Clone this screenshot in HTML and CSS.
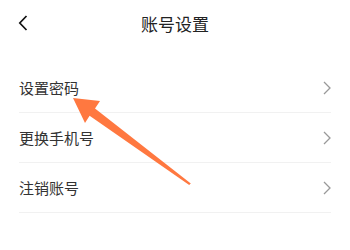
FILE: index.html
```html
<!DOCTYPE html>
<html lang="zh-CN">
<head>
  <meta charset="UTF-8">
  <meta name="viewport" content="width=device-width, initial-scale=1.0">
  <title>账号设置</title>
  <link rel="stylesheet" href="styles.css">
</head>
<body>
  <div class="page">
    <div class="header">
      <span class="back">
        <svg width="10" height="16" viewBox="0 0 10 16"><path d="M8.5 1 L1.8 8 L8.5 15" fill="none" stroke="#111" stroke-width="1.7"/></svg>
      </span>
      <h2 class="title">账号设置</h2>
    </div>

    <ul class="menu">
      <li class="menu-item">
        <span>设置密码</span>
        <svg class="chevron" width="8" height="14" viewBox="0 0 8 14"><path d="M1 1 L7 7 L1 13" fill="none" stroke="#999" stroke-width="1.3"/></svg>
      </li>
      <li class="menu-item">
        <span>更换手机号</span>
        <svg class="chevron" width="8" height="14" viewBox="0 0 8 14"><path d="M1 1 L7 7 L1 13" fill="none" stroke="#999" stroke-width="1.3"/></svg>
      </li>
      <li class="menu-item">
        <span>注销账号</span>
        <svg class="chevron" width="8" height="14" viewBox="0 0 8 14"><path d="M1 1 L7 7 L1 13" fill="none" stroke="#999" stroke-width="1.3"/></svg>
      </li>
    </ul>

    <!-- annotation arrow drawn over the list -->
    <svg class="pointer" width="350" height="250" viewBox="0 0 350 250">
      <polygon points="73,98 100,101 95,108.6 190.8,183.4 189.2,185 89.6,115.8 85,123" fill="#ff7840"/>
    </svg>
  </div>
</body>
</html>
```

FILE: styles.css
```css
body {
  margin: 0;
  background-color: #fff;
  font-family: "Noto Sans CJK SC", "Noto Sans", sans-serif;
  color: #333;
}

.page {
  position: relative;
  width: 350px;
  height: 250px;
  overflow: hidden;
}

.header {
  position: relative;
  height: 46px;
  display: flex;
  align-items: center;
  justify-content: center;
}

.back {
  position: absolute;
  left: 18px;
  top: 15px;
  display: flex;
}

.title {
  margin: 0;
  font-size: 17px;
  font-weight: normal;
  color: #222;
}

.menu {
  list-style: none;
  margin: 17px 19px 0;
  padding: 0;
}

.menu-item {
  height: 49px;
  display: flex;
  align-items: center;
  justify-content: space-between;
  border-bottom: 1px solid #f1f1f1;
  font-size: 15px;
  color: #333;
}

.chevron {
  margin-right: 0;
}

.pointer {
  position: absolute;
  left: 0;
  top: 0;
  pointer-events: none;
}
```
